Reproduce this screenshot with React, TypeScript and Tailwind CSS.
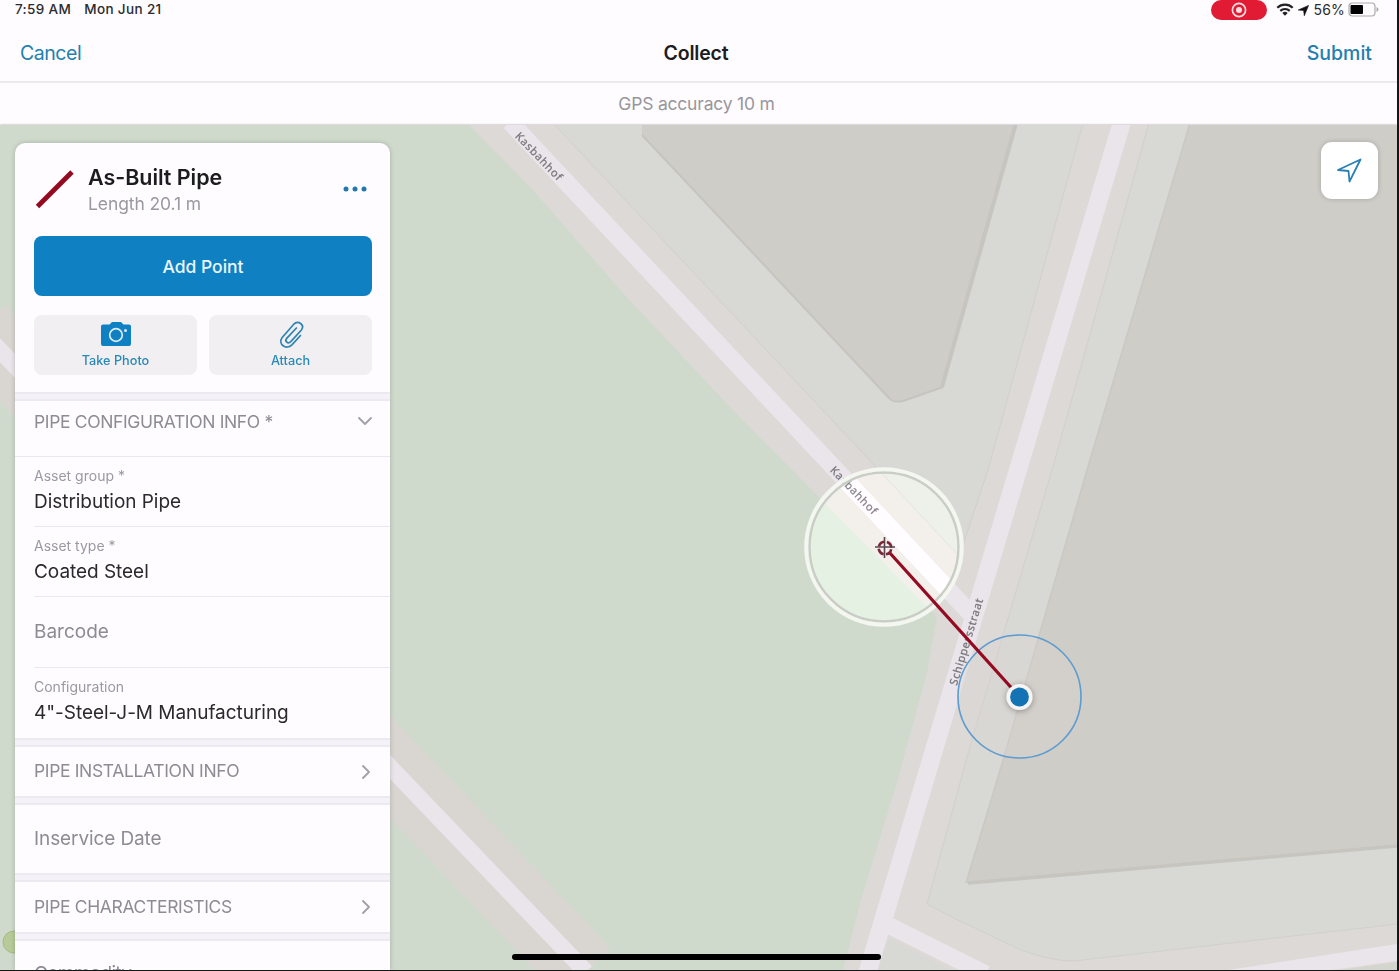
import React from 'react';
import { ChevronDown, ChevronRight } from 'lucide-react';
import clsx from 'clsx';

const fields = [
  { label: 'Asset group *', value: 'Distribution Pipe' },
  { label: 'Asset type *', value: 'Coated Steel' },
  { label: 'Barcode', value: '' },
  { label: 'Configuration', value: '4"-Steel-J-M Manufacturing' },
];

const StatusBar: React.FC = () => (
  <div className="flex h-5 items-center justify-between pl-[15px] pr-[18px] text-[13.5px] font-medium text-[#2b2b2d]">
    <div className="flex gap-[13px] whitespace-nowrap pb-[2px] tracking-[0.36px]">
      <span>7:59 AM</span>
      <span>Mon Jun 21</span>
    </div>
    <div className="flex items-center">
      <div className="mr-[9px] flex h-5 w-14 items-center justify-center rounded-full bg-[#e01b33]">
        <svg width="16" height="16" viewBox="0 0 16 16">
          <circle cx="8" cy="8" r="6.6" fill="none" stroke="#fbdfe3" strokeWidth="1.7" />
          <circle cx="8" cy="8" r="3" fill="#fbdfe3" />
        </svg>
      </div>
      <svg width="18" height="13" viewBox="0 0 18 13" className="mb-px mr-[4px]" fill="none" stroke="#222" strokeWidth="2.2">
        <path d="M1.3 4.7a11 11 0 0 1 15.4 0" />
        <path d="M4.3 7.9a6.8 6.8 0 0 1 9.4 0" />
        <path d="M9 12.8 6.3 10a3.9 3.9 0 0 1 5.4 0z" fill="#222" stroke="none" />
      </svg>
      <svg width="11" height="11" viewBox="0 0 11 11" className="mr-[5px]">
        <path d="M10.6.4 6.3 10.8 5.6 5.5.2 5z" fill="#111" stroke="#111" strokeWidth="0.6" />
      </svg>
      <span className="mr-[3px] pb-px text-[14px] font-normal tracking-[0.15px]">56%</span>
      <svg width="31" height="15" viewBox="0 0 31 15" className="mb-px">
        <rect x="1" y="1" width="26" height="13" rx="3.5" fill="none" stroke="#aaa9ac" strokeWidth="1.2" />
        <rect x="2.5" y="3" width="12.5" height="9" rx="1" fill="#000" />
        <path d="M28.5 5q2 .6 2 2.5t-2 2.5z" fill="#aaa9ac" />
      </svg>
    </div>
  </div>
);

const NavBar: React.FC = () => (
  <div className="grid h-[63px] grid-cols-3 items-center border-b-2 border-[#ebe9ec] pl-5 pr-[25px] pt-[7px] text-[19.5px]">
    <button className="text-left tracking-[-0.45px] text-[#2280b0]">Cancel</button>
    <h1 className="text-center font-semibold tracking-[-0.2px] text-[#1c1c1e]">Collect</h1>
    <button className="text-right font-medium text-[#2280b0]">Submit</button>
  </div>
);

const Map: React.FC = () => (
  <svg className="absolute inset-0" width="1397" height="845" viewBox="0 125 1397 845">
    <defs>
      <filter id="dotShadow" x="-50%" y="-50%" width="200%" height="200%">
        <feDropShadow dx="0" dy="1" stdDeviation="3" floodColor="#000" floodOpacity="0.35" />
      </filter>
    </defs>
    <rect x="0" y="124" width="1397" height="846" fill="#dcd9d6" />

    {/* Park */}
    <path d="M0 124H468L533 190 623 293 730 407 800 478 937 617 927 673 897 782 861 900 843 970H0z" fill="#cfdacd" />
    <path d="M-20 329 391 768 585 972" fill="none" stroke="#d9d6d2" strokeWidth="70" />

    {/* Blocks and buildings */}
    <path d="M553 123 832 420 957 554 963 545 988 470 1083 123z" fill="#d8d9d4" stroke="#d1d0cb" />
    <path d="M1149 123 1052 470 969 750 927 904 954 918 1021 950Q1055 962 1074 961L1398 924V123z" fill="#d8d9d4" stroke="#d1d0cb" />
    <path d="M642 123V135L889 398Q893 403 903 401L943 387 1018 123z" fill="#cfcdc8" />
    <path d="M642 135 889 398Q893 403 903 401L943 387" fill="none" stroke="#c6c4bf" strokeWidth="2" />
    <path d="M942 387 1016 123" fill="none" stroke="#c7c5c0" strokeWidth="4" />
    <path d="M1190 123 1087 470 1001 767 966 883 1398 845V123z" fill="#cfcdc8" />
    <path d="M1190 123 1087 470 1001 767 966 883" fill="none" stroke="#cac8c3" strokeWidth="1.5" />
    <path d="M968 883 1398 846" fill="none" stroke="#c7c5c0" strokeWidth="3.5" />
    <path d="M889 938 878 970H950z" fill="#d8d9d4" />
    <path d="M1335 971 1397 962V971z" fill="#d3d6ce" />

    {/* Roads */}
    <g fill="none" stroke="#e9e5ea">
      <path d="M-20 329 15 366 391 768 586 972" strokeWidth="16.5" />
      <path d="M510 122 970 613" strokeWidth="17.5" />
      <path d="M1122 122 1018 470 934 750 867 974" strokeWidth="18" />
      <path d="M884 923 986 974" strokeWidth="17" />
    </g>
    <path d="M1222 971 1397 944V961L1325 971z" fill="#e9e5ea" />
    <circle cx="14" cy="942" r="11" fill="#b7cb98" stroke="#a5ba8a" />

    <g fill="#77757a" stroke="#77757a" strokeWidth="0.25" fontSize="11" fontFamily='"Noto Sans", sans-serif' textAnchor="middle">
      <text transform="translate(536 159) rotate(46)" textLength="62">Kasbahhof</text>
      <text transform="translate(851 493) rotate(46)" textLength="62">Kasbahhof</text>
      <text transform="translate(970 643) rotate(-73)" textLength="90">Schippersstraat</text>
    </g>

    {/* Magnified area under the crosshair */}
    <circle cx="884" cy="547" r="76" fill="#181818" className="mix-blend-color-dodge" />
    <circle cx="884" cy="547" r="74.5" fill="none" stroke="#c9cdc6" strokeWidth="2.5" />
    <circle cx="884" cy="547" r="77.8" fill="none" stroke="#f4f6f0" strokeWidth="4" />

    {/* GPS accuracy */}
    <circle cx="1019.5" cy="696.5" r="61.5" fill="#dbd3d0" fillOpacity="0.35" stroke="#5c9bd0" strokeWidth="1.6" />

    <path d="M889 552 1017 694" stroke="#940a20" strokeWidth="3.2" />
    <circle cx="885" cy="548" r="6.3" fill="none" stroke="#7c2438" strokeWidth="2.6" strokeDasharray="7.4 2.5" strokeDashoffset="-1.2" />
    <path d="M884.5 537V558M875 547H895" stroke="#5a4450" strokeWidth="1.6" />

    <circle cx="1019.5" cy="697" r="13" fill="#f6f4f4" filter="url(#dotShadow)" />
    <circle cx="1019.5" cy="697" r="9.4" fill="#1473b2" />
  </svg>
);

const Divider: React.FC = () => (
  <div className="h-[9px] shrink-0 border-y-[2px] border-[#ece9f1] bg-[#f4f1f9]" />
);

type SectionProps = { title: string; open?: boolean };

const Section: React.FC<SectionProps> = ({ title, open }) => (
  <div
    className={clsx(
      'flex shrink-0 justify-between pl-[19px] text-[17.5px] tracking-[-0.35px] text-[#8e8c92]',
      open ? 'h-[55px] items-start pr-[13px] pt-2' : 'h-[49.5px] items-center pr-3'
    )}
  >
    <span>{title}</span>
    {open ? (
      <ChevronDown className="h-6 w-6 text-[#a3a1a7]" strokeWidth={1.9} />
    ) : (
      <ChevronRight className="h-6 w-6 text-[#a3a1a7]" strokeWidth={1.9} />
    )}
  </div>
);

const FormPanel: React.FC = () => (
  <aside className="relative ml-[15px] mt-[18px] flex h-[827px] w-[375px] flex-col overflow-hidden rounded-t-[10px] bg-[#fefcff] shadow-[0_0_5px_rgba(0,0,0,0.2)]">
    <div className="flex h-[93px] shrink-0 items-center pl-5 pr-[22px]">
      <svg width="40" height="40" viewBox="0 0 40 40">
        <path d="M2.5 36.5 37 2" stroke="#940a20" strokeWidth="4.8" />
      </svg>
      <div className="ml-[13px] flex-1 pt-px">
        <h2 className="text-[21.5px] font-semibold leading-[27px] tracking-[-0.05px] text-[#1c1c1e]">As-Built Pipe</h2>
        <p className="text-[17.5px] leading-[26px] tracking-[-0.1px] text-[#9b999e]">Length 20.1 m</p>
      </div>
      <svg width="26" height="6" viewBox="0 0 26 6" fill="#2377ae" className="mb-0.5">
        <circle cx="4" cy="3" r="2.5" />
        <circle cx="13" cy="3" r="2.5" />
        <circle cx="22" cy="3" r="2.5" />
      </svg>
    </div>

    <button className="mx-[19px] h-[60px] w-[338px] shrink-0 rounded-lg bg-[#0f80c2] pt-0.5 text-[17.5px] font-medium text-[#eaf6fc]">
      Add Point
    </button>
    <div className="mx-[19px] mb-[17px] mt-[19px] grid h-[60px] w-[338px] shrink-0 grid-cols-2 gap-3 text-[12.7px] font-medium text-[#2789b5]">
      <button className="flex flex-col items-center rounded-lg bg-[#f2eff3] pt-1">
        <svg width="32" height="30" viewBox="0 0 32 30">
          <path d="M3 5.500h6.500L12 3h9l2.500 2.500H29a2 2 0 0 1 2 2V25a2 2 0 0 1-2 2H3a2 2 0 0 1-2-2V7.500a2 2 0 0 1 2-2z" fill="#0f80c2" />
          <circle cx="16" cy="16" r="6.3" fill="none" stroke="#dcebf5" strokeWidth="1.7" />
          <circle cx="25.5" cy="11.5" r="1.5" fill="#dcebf5" />
        </svg>
        <span className="leading-[23px]">Take Photo</span>
      </button>
      <button className="flex flex-col items-center rounded-lg bg-[#f2eff3] pt-1">
        <svg width="30" height="30" viewBox="0 0 30 30" fill="none" stroke="#2d84b0" strokeWidth="1.7" strokeLinecap="round">
          <path d="m24.500 16.500-8.600 9.300c-5.700 5.800-14.500-.8-9.700-7.300L17.800 5.200c4.300-4.500 11.400.7 7.600 5.800L14.800 22.600c-2.900 2.800-6.500-.2-4.100-3.300L20.400 9" />
        </svg>
        <span className="leading-[23px]">Attach</span>
      </button>
    </div>

    <Divider />
    <Section title="PIPE CONFIGURATION INFO *" open />
    <div className="shrink-0 border-t border-[#ebe7ef] pl-[19px]">
      {fields.map((field) => (
        <div
          key={field.label}
          className="flex h-[70.2px] flex-col justify-center border-b border-[#ebe7ef] last:border-b-0"
        >
          {field.value ? (
            <>
              <span className="text-[14px] leading-5 text-[#9b999e]">{field.label}</span>
              <span className="text-[19px] leading-8 tracking-[-0.04px] text-[#2a292c]">{field.value}</span>
            </>
          ) : (
            <span className="text-[19px] text-[#8e8c92]">{field.label}</span>
          )}
        </div>
      ))}
    </div>
    <Divider />
    <Section title="PIPE INSTALLATION INFO" />
    <Divider />
    <div className="flex h-[68px] shrink-0 items-center pl-[19px] text-[19px] tracking-[-0.1px] text-[#8e8c92]">
      Inservice Date
    </div>
    <Divider />
    <Section title="PIPE CHARACTERISTICS" />
    <Divider />
    <div className="flex h-[66px] shrink-0 items-center pl-[19px] text-[19px] tracking-[-0.7px] text-[#8e8c92]">
      Commodity
    </div>
  </aside>
);

export default function App() {
  return (
    <div className="h-[971px] w-[1399px] overflow-hidden bg-[#161616] pr-[2px] pb-px font-['Inter',sans-serif]">
      <div className="flex h-full flex-col overflow-hidden bg-[#fefcff]">
        <StatusBar />
        <NavBar />
        <div className="flex h-[42px] items-center justify-center pr-1 text-[17.5px] tracking-[-0.2px] text-[#98969b]">
          GPS accuracy 10 m
        </div>
        <main className="relative isolate flex min-h-0 flex-1 items-start justify-between shadow-[0_0_2px_rgba(0,0,0,0.4)]">
          <Map />
          <FormPanel />
          <button className="relative mr-[19px] mt-[17px] flex h-[57px] w-[57px] items-center justify-center rounded-[11px] bg-white shadow-[0_0_5px_rgba(0,0,0,0.2)]">
            <svg width="26" height="26" viewBox="0 0 26 26" fill="none" stroke="#2a7fb4" strokeWidth="1.8" strokeLinejoin="round">
              <path d="M23.5 1.500 12.500 23.500 11.500 13 1 12z" />
            </svg>
          </button>
          <div className="absolute bottom-[10px] left-[512px] h-[6px] w-[369px] rounded-full bg-black" />
        </main>
      </div>
    </div>
  );
}
